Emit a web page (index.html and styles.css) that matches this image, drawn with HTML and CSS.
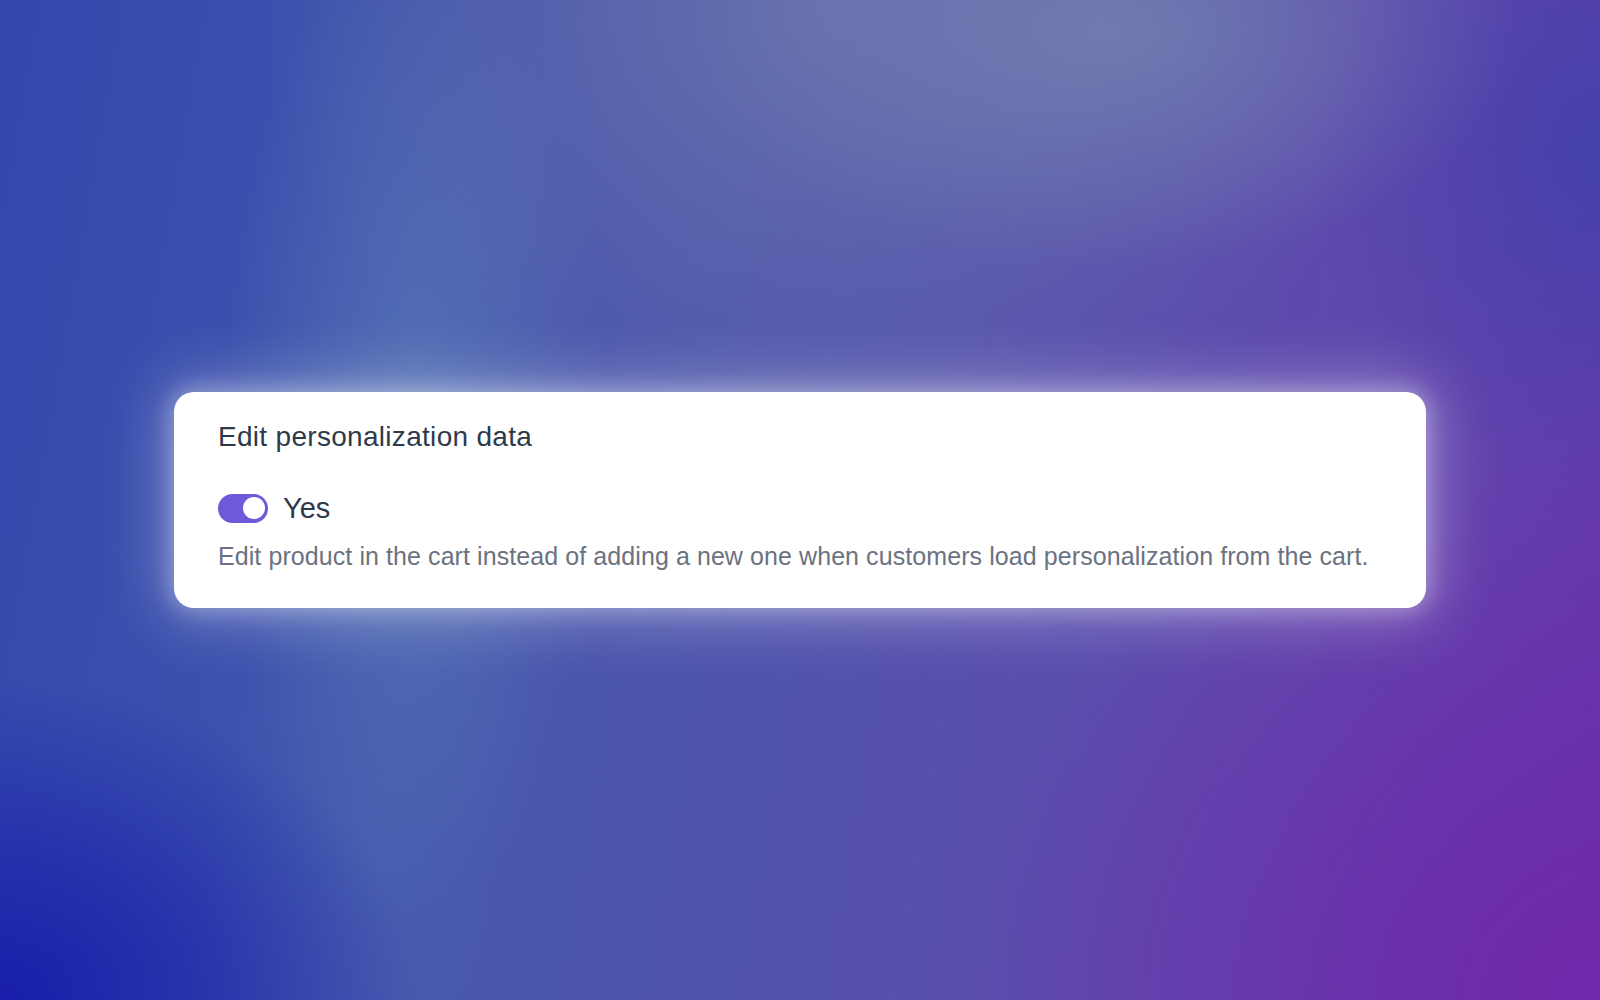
FILE: index.html
```html
<!DOCTYPE html>
<html lang="en">
<head>
<meta charset="utf-8">
<title>Edit personalization data</title>
<link rel="stylesheet" href="styles.css">
</head>
<body>
<main class="stage">
  <section class="card">
    <h2 class="card-title">Edit personalization data</h2>
    <div class="toggle-row">
      <span class="toggle" role="switch" aria-checked="true"><span class="knob"></span></span>
      <span class="toggle-label">Yes</span>
    </div>
    <p class="card-desc">Edit product in the cart instead of adding a new one when customers load personalization from the cart.</p>
  </section>
</main>
</body>
</html>
```

FILE: styles.css
```css
html, body {
  margin: 0;
  padding: 0;
  width: 100%;
  height: 100%;
}

body {
  font-family: "Liberation Sans", Arial, sans-serif;
  overflow: hidden;
}

.stage {
  width: 1600px;
  height: 1000px;
  display: flex;
  align-items: center;
  justify-content: center;
  background:
    radial-gradient(ellipse 26% 32% at 0% 100%, rgba(24, 30, 170, 1) 0%, rgba(24, 30, 170, 0.6) 45%, rgba(24, 30, 170, 0) 100%),
    radial-gradient(ellipse 26% 24% at 69% 3%, rgba(114, 126, 176, 0.9) 0%, rgba(114, 126, 176, 0) 100%),
    radial-gradient(ellipse 36% 48% at 52% 0%, rgba(106, 116, 172, 0.85) 0%, rgba(106, 116, 172, 0) 100%),
    radial-gradient(ellipse 12% 50% at 26% 42%, rgba(92, 124, 184, 0.7) 0%, rgba(92, 124, 184, 0) 100%),
    radial-gradient(ellipse 11% 35% at 24% 85%, rgba(80, 108, 178, 0.4) 0%, rgba(80, 108, 178, 0) 100%),
    radial-gradient(ellipse 40% 55% at 100% 100%, rgba(112, 40, 170, 1) 0%, rgba(112, 40, 170, 0) 100%),
    radial-gradient(ellipse 18% 35% at 100% 15%, rgba(66, 66, 170, 0.9) 0%, rgba(66, 66, 170, 0) 100%),
    linear-gradient(100deg, #3448ad 0%, #3d52ad 22%, #4b55ac 42%, #5750ad 60%, #5f48ad 80%, #6438ab 100%);
}

.card {
  width: 1252px;
  box-sizing: border-box;
  padding: 29px 44px 38px 44px;
  background: #ffffff;
  border-radius: 20px;
  box-shadow: 0 0 60px 14px rgba(255, 255, 255, 0.28), 0 0 20px 4px rgba(255, 255, 255, 0.3);
  display: flex;
  flex-direction: column;
}

.card-title {
  margin: 0;
  font-size: 28px;
  line-height: 32px;
  letter-spacing: 0.3px;
  font-weight: 400;
  color: #2e3a4b;
}

.toggle-row {
  margin-top: 38px;
  display: flex;
  align-items: center;
  gap: 15px;
}

.toggle {
  width: 50px;
  height: 29px;
  border-radius: 15px;
  background: #6c5ad8;
  display: flex;
  align-items: center;
  justify-content: flex-end;
  padding: 0 3px;
  box-sizing: border-box;
}

.knob {
  width: 22px;
  height: 22px;
  border-radius: 50%;
  background: #ffffff;
}

.toggle-label {
  font-size: 29px;
  line-height: 34px;
  color: #2e3a4b;
}

.card-desc {
  margin: 17px 0 0 0;
  font-size: 25px;
  line-height: 28px;
  letter-spacing: 0.08px;
  color: #6b7280;
}
```
